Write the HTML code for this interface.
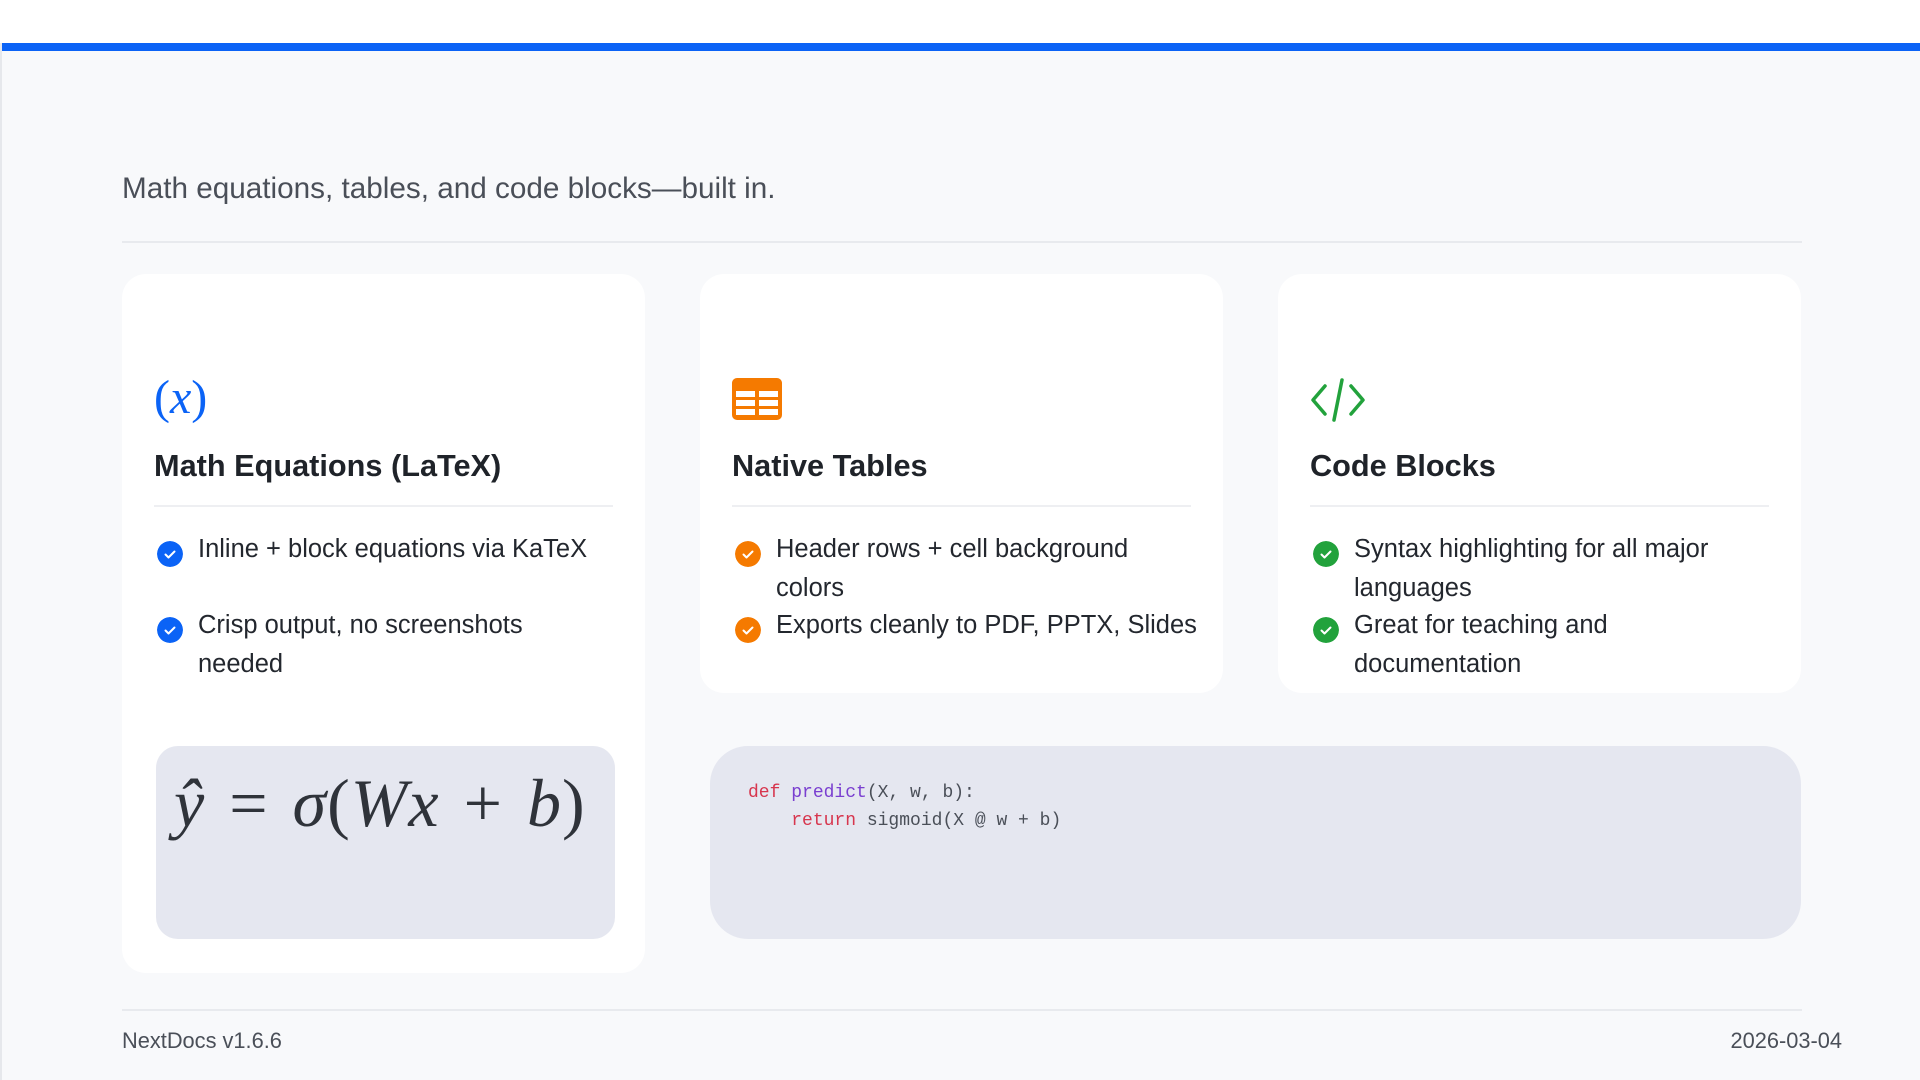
<!DOCTYPE html>
<html><head><meta charset="utf-8"><style>
*{box-sizing:border-box;margin:0;padding:0}
body{width:1920px;height:1080px;overflow:hidden;background:#fff;font-family:"Liberation Sans",sans-serif;position:relative}
.page{position:absolute;left:0;top:43px;width:1920px;height:1037px;background:#f8f9fb;border-left:2px solid #e6e8ec}
.bar{position:absolute;left:2px;right:0;top:43px;height:8px;background:#0b63f6}
.sub{position:absolute;left:122px;top:172px;font-size:29.7px;color:#4a4f58}
.hr{position:absolute;left:122px;width:1680px;height:2px;background:#e8eaee}
.card{position:absolute;top:274px;width:523px;background:#fff;border-radius:24px;padding:0 32px}
.icon{position:absolute;left:32px;top:104px}
.title{position:absolute;left:32px;top:174px;font-size:30.7px;font-weight:bold;color:#1f2329}
.tdiv{position:absolute;left:32px;right:32px;top:231px;height:2px;background:#eeeff2}
ul{position:absolute;left:32px;right:-40px;top:256px;list-style:none}
li{height:76px;position:relative;padding-left:44px;font-size:25.5px;line-height:39px;color:#23272e;white-space:nowrap}
li .ck{position:absolute;left:3px;top:11px;width:26px;height:26px;border-radius:50%}
.math{position:absolute;left:156px;top:746px;width:459px;height:193px;background:#e5e7f0;border-radius:22px;font-family:"Liberation Serif",serif;font-style:italic;font-size:68px;color:#2f333a;padding:18px 0 0 18px;white-space:nowrap;word-spacing:6px;letter-spacing:1px}
.code{position:absolute;left:710px;top:746px;width:1091px;height:193px;background:#e5e7f0;border-radius:38px;padding:33px 0 0 38px;font-family:"Liberation Mono",monospace;font-size:18px;line-height:28px;color:#4a4f58;white-space:pre}
.kw{color:#d7364e}.fn{color:#7a3fd0}
.foot{position:absolute;top:1028px;font-size:21.8px;color:#4a4f58}
</style></head><body>
<div class="page"></div>
<div class="bar"></div>
<div class="sub">Math equations, tables, and code blocks—built in.</div>
<div class="hr" style="top:241px"></div>

<div class="card" style="left:122px;height:699px">
 <div class="icon" style="font-family:'Liberation Serif',serif;font-size:48px;color:#0b63f6;top:96px"><span>(</span><i>x</i><span>)</span></div>
 <div class="title">Math Equations (LaTeX)</div>
 <div class="tdiv"></div>
 <ul>
  <li><svg class="ck" viewBox="0 0 26 26"><circle cx="13" cy="13" r="13" fill="#0b63f6"/><path d="M8.5 13.5l3 3 6-6" stroke="#fff" stroke-width="2" fill="none" stroke-linecap="round" stroke-linejoin="round"/></svg>Inline + block equations via KaTeX</li>
  <li><svg class="ck" viewBox="0 0 26 26"><circle cx="13" cy="13" r="13" fill="#0b63f6"/><path d="M8.5 13.5l3 3 6-6" stroke="#fff" stroke-width="2" fill="none" stroke-linecap="round" stroke-linejoin="round"/></svg>Crisp output, no screenshots<br>needed</li>
 </ul>
</div>

<div class="card" style="left:700px;height:419px">
 <svg class="icon" width="50" height="42" viewBox="0 0 50 42"><rect x="0" y="0" width="50" height="42" rx="5" fill="#f57a00"/><g fill="#fff"><rect x="4" y="13" width="19" height="6"/><rect x="27" y="13" width="19" height="6"/><rect x="4" y="22" width="19" height="6"/><rect x="27" y="22" width="19" height="6"/><rect x="4" y="31" width="19" height="6"/><rect x="27" y="31" width="19" height="6"/></g></svg>
 <div class="title">Native Tables</div>
 <div class="tdiv"></div>
 <ul>
  <li><svg class="ck" viewBox="0 0 26 26"><circle cx="13" cy="13" r="13" fill="#f57a00"/><path d="M8.5 13.5l3 3 6-6" stroke="#fff" stroke-width="2" fill="none" stroke-linecap="round" stroke-linejoin="round"/></svg>Header rows + cell background<br>colors</li>
  <li><svg class="ck" viewBox="0 0 26 26"><circle cx="13" cy="13" r="13" fill="#f57a00"/><path d="M8.5 13.5l3 3 6-6" stroke="#fff" stroke-width="2" fill="none" stroke-linecap="round" stroke-linejoin="round"/></svg>Exports cleanly to PDF, PPTX, Slides</li>
 </ul>
</div>

<div class="card" style="left:1278px;height:419px">
 <svg class="icon" width="56" height="44" viewBox="0 0 56 44" style="top:104px"><path d="M15 8L3 22l12 14M41 8l12 14-12 14M32 2L24 42" stroke="#22a23c" stroke-width="3.5" fill="none" stroke-linecap="round" stroke-linejoin="round"/></svg>
 <div class="title">Code Blocks</div>
 <div class="tdiv"></div>
 <ul>
  <li><svg class="ck" viewBox="0 0 26 26"><circle cx="13" cy="13" r="13" fill="#22a23c"/><path d="M8.5 13.5l3 3 6-6" stroke="#fff" stroke-width="2" fill="none" stroke-linecap="round" stroke-linejoin="round"/></svg>Syntax highlighting for all major<br>languages</li>
  <li><svg class="ck" viewBox="0 0 26 26"><circle cx="13" cy="13" r="13" fill="#22a23c"/><path d="M8.5 13.5l3 3 6-6" stroke="#fff" stroke-width="2" fill="none" stroke-linecap="round" stroke-linejoin="round"/></svg>Great for teaching and<br>documentation</li>
 </ul>
</div>

<div class="math">ŷ <span style="font-style:normal">=</span> σ<span style="font-style:normal">(</span>Wx <span style="font-style:normal">+</span> b<span style="font-style:normal">)</span></div>
<div class="code"><span class="kw">def</span> <span class="fn">predict</span>(X, w, b):
    <span class="kw">return</span> sigmoid(X @ w + b)</div>

<div class="hr" style="top:1009px"></div>
<div class="foot" style="left:122px">NextDocs v1.6.6</div>
<div class="foot" style="right:78px">2026-03-04</div>
</body></html>
